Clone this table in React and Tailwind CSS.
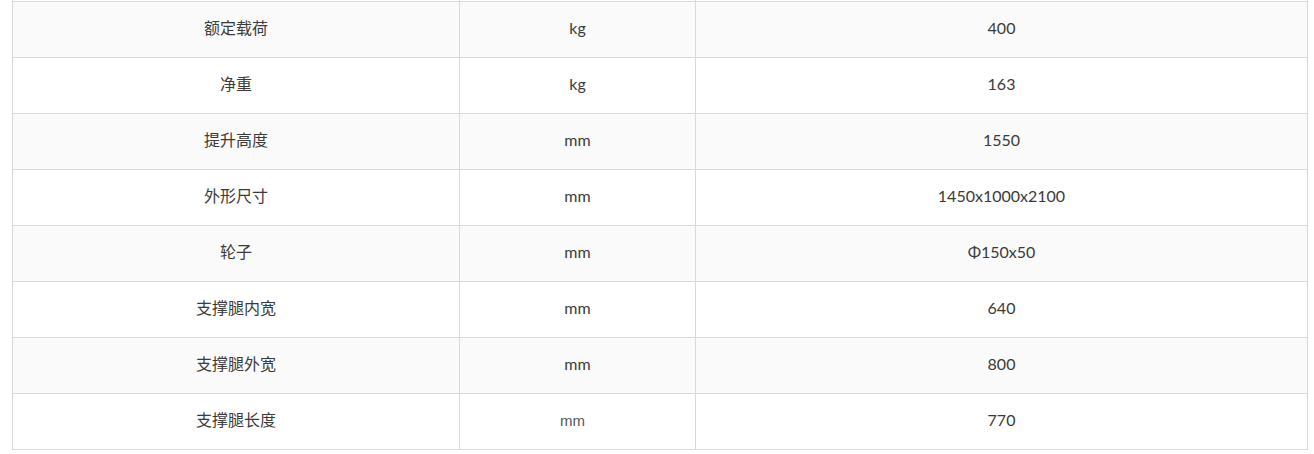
import React from "react";

const rows = [
  ["额定载荷", "kg", "400"],
  ["净重", "kg", "163"],
  ["提升高度", "mm", "1550"],
  ["外形尺寸", "mm", "1450x1000x2100"],
  ["轮子", "mm", "Φ150x50"],
  ["支撑腿内宽", "mm", "640"],
  ["支撑腿外宽", "mm", "800"],
  ["支撑腿长度", "mm", "770"],
];

const cell = "border border-[#d9d9d9] text-center align-middle h-[56px] p-0 pb-[3px]";

const App = () => {
  return (
    <div className="w-[1314px] h-[454px] bg-white overflow-hidden">
      <div className="px-[12px] pr-[6px]">
        <table
          className="w-full border-collapse -mt-[55px] text-[16px] text-[#3a3a3a]"
          style={{ fontFamily: "Lato, 'Noto Sans CJK SC', sans-serif" }}
        >
          <colgroup>
            <col className="w-[447px]" />
            <col className="w-[236px]" />
            <col />
          </colgroup>
          <tbody>
            <tr className="bg-white">
              <td className={cell}></td>
              <td className={cell}></td>
              <td className={cell}></td>
            </tr>
            {rows.map((r, i) => (
              <tr key={r[0]} className={i % 2 === 0 ? "bg-[#fafafa]" : "bg-white"}>
                <td className={cell}>{r[0]}</td>
                <td className={cell}>
                  {i === rows.length - 1 ? (
                    <span className="text-[15px] text-[#555] pr-[10px]" style={{ fontFamily: "'Liberation Sans', sans-serif" }}>
                      {r[1]}
                    </span>
                  ) : (
                    r[1]
                  )}
                </td>
                <td className={cell}>{r[2]}</td>
              </tr>
            ))}
          </tbody>
        </table>
      </div>
    </div>
  );
};

export default App;
